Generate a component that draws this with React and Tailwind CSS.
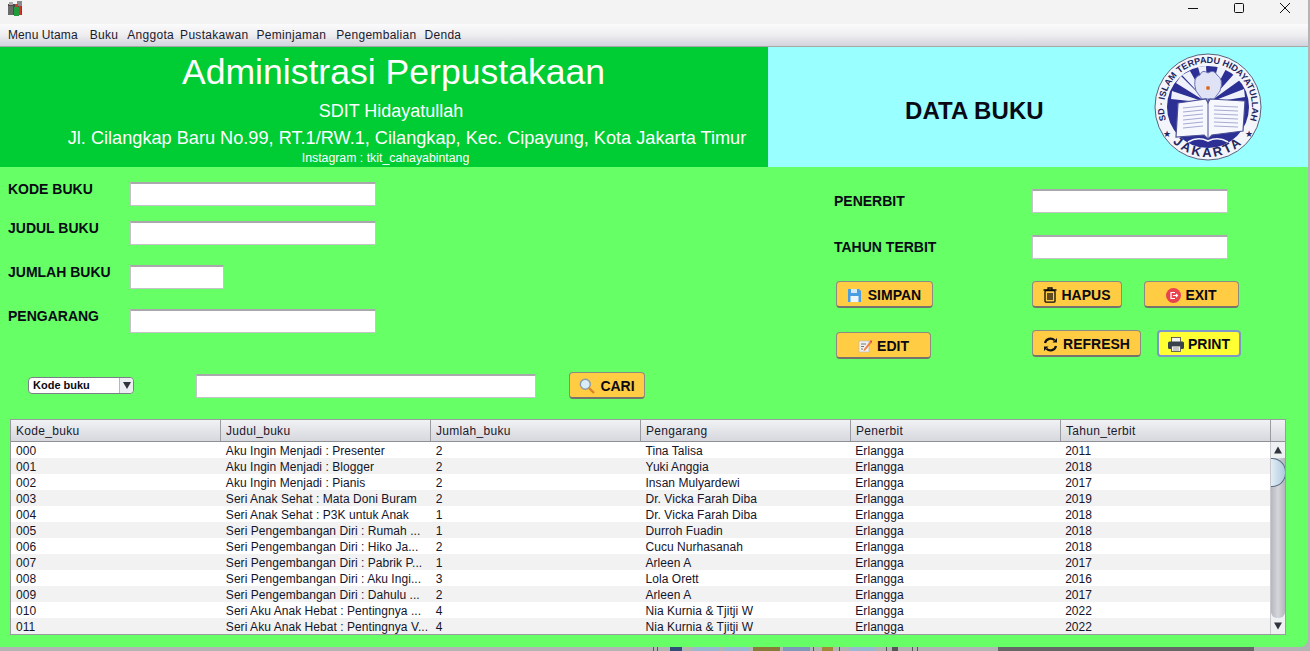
const MENUS = [
  ['Menu Utama', 'ml-2 tracking-[0.1px]'],
  ['Buku', 'ml-[12px]'],
  ['Anggota', 'ml-[9px]'],
  ['Pustakawan', 'ml-[6px]'],
  ['Peminjaman', 'ml-2'],
  ['Pengembalian', 'ml-[10px]'],
  ['Denda', 'ml-2'],
];

const COLUMNS = ['Kode_buku', 'Judul_buku', 'Jumlah_buku', 'Pengarang', 'Penerbit', 'Tahun_terbit'];

const ROWS = [
  ['000', 'Aku Ingin Menjadi : Presenter', '2', 'Tina Talisa', 'Erlangga', '2011'],
  ['001', 'Aku Ingin Menjadi : Blogger', '2', 'Yuki Anggia', 'Erlangga', '2018'],
  ['002', 'Aku Ingin Menjadi : Pianis', '2', 'Insan Mulyardewi', 'Erlangga', '2017'],
  ['003', 'Seri Anak Sehat : Mata Doni Buram', '2', 'Dr. Vicka Farah Diba', 'Erlangga', '2019'],
  ['004', 'Seri Anak Sehat : P3K untuk Anak', '1', 'Dr. Vicka Farah Diba', 'Erlangga', '2018'],
  ['005', 'Seri Pengembangan Diri : Rumah ...', '1', 'Durroh Fuadin', 'Erlangga', '2018'],
  ['006', 'Seri Pengembangan Diri : Hiko Ja...', '2', 'Cucu Nurhasanah', 'Erlangga', '2018'],
  ['007', 'Seri Pengembangan Diri : Pabrik P...', '1', 'Arleen A', 'Erlangga', '2017'],
  ['008', 'Seri Pengembangan Diri : Aku Ingi...', '3', 'Lola Orett', 'Erlangga', '2016'],
  ['009', 'Seri Pengembangan Diri : Dahulu ...', '2', 'Arleen A', 'Erlangga', '2017'],
  ['010', 'Seri Aku Anak Hebat : Pentingnya ...', '4', 'Nia Kurnia & Tjitji W', 'Erlangga', '2022'],
  ['011', 'Seri Aku Anak Hebat : Pentingnya V...', '4', 'Nia Kurnia & Tjitji W', 'Erlangga', '2022'],
];

function AppIcon() {
  return (
    <svg width="16" height="16" viewBox="0 0 16 16">
      <rect x="1" y="3" width="14" height="11" fill="#4a4a4a" />
      <rect x="2" y="1" width="4" height="3" fill="#a8a8a8" />
      <rect x="10" y="0" width="5" height="5" fill="#8a8a8a" />
      <rect x="1" y="5" width="5" height="9" fill="#6a6a6a" />
      <rect x="7" y="6" width="5" height="9" fill="#1f9d3a" />
      <rect x="12" y="5" width="2" height="9" fill="#d8322c" />
      <rect x="14" y="5" width="1" height="9" fill="#2a4fc0" />
      <rect x="8" y="3" width="3" height="3" fill="#c8402c" />
    </svg>
  );
}

function Logo() {
  return (
    <svg width="108" height="108" viewBox="0 0 108 108">
      <defs>
        <path id="topArc" d="M 14.3 73 A 44 44 0 1 1 93.7 73" />
        <path id="botArc" d="M 14 84 A 50 50 0 0 0 94 84" />
      </defs>
      <circle cx="54" cy="54" r="53" fill="#f4f5fa" stroke="#5a5f7d" strokeWidth="1" />
      <circle cx="54" cy="54" r="41" fill="#2c2f93" />
      <path d="M54 50 L17 46 L18 38 Z M54 50 L22 30 L27 23 Z M54 50 L36 18 L28 22 Z M54 50 L44 14 L52 13 Z M54 50 L64 13 L72 16 Z M54 50 L80 21 L86 27 Z M54 50 L90 36 L91 44 Z" fill="#eef0fa" />
      <path d="M42 38 Q38 24 46 22 Q48 16 54 20 Q60 16 63 22 Q70 26 66 38 L60 46 H48 Z" fill="#dfe3f5" stroke="#6b74b8" strokeWidth="1" />
      <circle cx="54" cy="35" r="2" fill="#d9702a" />
      <path d="M24 50 L52 46 L54 50 L56 46 L91 48 L89 78 L58 82 L54 86 L50 82 L22 84 Z" fill="#f7f8fd" stroke="#4b4f96" strokeWidth="1.2" />
      <path d="M54 50 V86" stroke="#4b4f96" strokeWidth="1" />
      <path d="M29 55 L49 53 M29 59 L49 57 M29 63 L49 61 M29 67 L49 65 M29 71 L49 69 M29 75 L49 73 M60 53 L84 54 M60 57 L84 58 M60 61 L84 62 M60 65 L84 66 M60 69 L84 70 M60 73 L84 74" stroke="#a6abd2" strokeWidth="1.2" />
      <path d="M34 89 Q44 83 54 88 Q64 83 74 89" stroke="#f4f5fa" strokeWidth="1.6" fill="none" />
      <text fontFamily="Liberation Sans" fontWeight="700" fontSize="9" fill="#23265f">
        <textPath href="#topArc" startOffset="50%" textAnchor="middle">SD · ISLAM TERPADU HIDAYATULLAH</textPath>
      </text>
      <text fontFamily="Liberation Sans" fontWeight="700" fontSize="13" fill="#23265f" letterSpacing="2.4">
        <textPath href="#botArc" startOffset="50%" textAnchor="middle">JAKARTA</textPath>
      </text>
      <text x="9" y="84" fontSize="9" fill="#23265f">★</text>
      <text x="91" y="84" fontSize="9" fill="#23265f">★</text>
    </svg>
  );
}

function TextBox({ className }) {
  return <div className={`h-6 bg-white border border-[#c4c4ca] border-t-2 border-t-[#a9a9ad] ${className}`} />;
}

function FieldLabel({ children, className }) {
  return <div className={`text-[14px] leading-4 font-bold text-[#0a0a14] ${className}`}>{children}</div>;
}

function ActionButton({ icon, label, className = 'bg-[#ffcc44] border border-[#8f8a80] border-b-2 border-b-[#77736c]', gap = 'gap-[5px]' }) {
  return (
    <div className={`h-[27px] pt-[2px] flex items-center justify-center ${gap} rounded-[4px] text-[14px] font-bold text-[#0a0a14] ${className}`}>
      {icon}
      <span>{label}</span>
    </div>
  );
}

function SaveIcon() {
  return (
    <svg width="13" height="13" viewBox="0 0 13 13">
      <path d="M0 0 H11 L13 2 V13 H0 Z" fill="#4a9ee0" />
      <rect x="3" y="0" width="6" height="4" fill="#d5e8f7" />
      <rect x="2.5" y="7" width="8" height="6" fill="#eef6fc" />
    </svg>
  );
}

function EditIcon() {
  return (
    <svg width="14" height="14" viewBox="0 0 14 14">
      <rect x="1" y="2" width="10" height="11" fill="#efefef" stroke="#b5b5b5" strokeWidth="0.6" />
      <path d="M3 5 H8 M3 7.5 H6 M3 10 H5" stroke="#777" strokeWidth="1" />
      <path d="M6 10 L12 2.5 L13.5 4 L7 11.5 L5.5 12 Z" fill="#f0803c" />
      <path d="M12 2.5 L13 1 L14 2.5 L13.5 4 Z" fill="#d9304a" />
    </svg>
  );
}

function TrashIcon() {
  return (
    <svg width="14" height="16" viewBox="0 0 14 16" fill="none" stroke="#0a0a0a" strokeWidth="1.3">
      <path d="M0.5 3 H13.5 M5 3 V1 H9 V3" />
      <rect x="2" y="3.5" width="10" height="11.7" rx="1.2" />
      <path d="M5 6 V13 M7 6 V13 M9 6 V13" />
    </svg>
  );
}

function ExitIcon() {
  return (
    <svg width="15" height="15" viewBox="0 0 15 15">
      <circle cx="7.5" cy="7.5" r="7.5" fill="#e8434e" />
      <path d="M9 4.5 H5 V10.5 H9" stroke="#fff" strokeWidth="1.2" fill="none" />
      <path d="M7 7.5 H11.5 M10 6 L11.5 7.5 L10 9" stroke="#fff" strokeWidth="1.1" fill="none" />
    </svg>
  );
}

function RefreshIcon() {
  return (
    <svg width="15" height="15" viewBox="0 0 15 15" fill="none" stroke="#111" strokeWidth="2.2">
      <path d="M2 6 A5.7 5.7 0 0 1 11.5 3.2" />
      <path d="M13 9 A5.7 5.7 0 0 1 3.5 11.8" />
      <path d="M9.5 5.4 H14 V1 Z" fill="#111" stroke="none" />
      <path d="M5.5 9.6 H1 V14 Z" fill="#111" stroke="none" />
    </svg>
  );
}

function PrintIcon() {
  return (
    <svg width="16" height="15" viewBox="0 0 16 15">
      <rect x="3.5" y="0.5" width="9" height="5" fill="#f4f4f4" stroke="#444" strokeWidth="0.8" />
      <rect x="0" y="4.5" width="16" height="7.5" rx="1.5" fill="#37424a" />
      <rect x="3.5" y="9" width="9" height="5.5" fill="#f4f4f4" stroke="#444" strokeWidth="0.8" />
      <path d="M5 11 H11 M5 13 H11" stroke="#888" strokeWidth="0.8" />
    </svg>
  );
}

function SearchIcon() {
  return (
    <svg width="16" height="16" viewBox="0 0 16 16">
      <circle cx="6.3" cy="6.3" r="5" fill="#d9ecf7" stroke="#8b9aa6" strokeWidth="1.4" />
      <path d="M10 10 L15 15" stroke="#d9822b" strokeWidth="2.4" />
    </svg>
  );
}

function ScrollBar() {
  return (
    <div className="w-[15px] shrink-0 flex flex-col bg-[#f2f3f5] border-l border-[#c8c9ce]">
      <div className="h-[16px] flex items-center justify-center bg-[#eef0f2]">
        <svg width="8" height="8" viewBox="0 0 8 8"><path d="M4 0.5 L8 7.5 H0 Z" fill="#30343c" /></svg>
      </div>
      <div className="flex-1 bg-gradient-to-r from-[#b6b8bf] via-[#d5d6db] to-[#b4b6bd] rounded-b-[6px]">
        <div className="h-[29px] w-[15px] rounded-r-[14px] border border-l-0 border-[#5a6f85] bg-gradient-to-r from-[#e4edf5] to-[#aecbe0]" />
      </div>
      <div className="h-[16px] flex items-center justify-center bg-[#eef0f2]">
        <svg width="8" height="8" viewBox="0 0 8 8"><path d="M4 7.5 L8 0.5 H0 Z" fill="#30343c" /></svg>
      </div>
    </div>
  );
}

// what shows of the desktop under the window
function DesktopStrip() {
  const pieces = [
    ['ml-[653px] w-px', 'bg-[#555]'],
    ['ml-[3px] w-px', 'bg-[#555]'],
    ['ml-[12px] w-[12px]', 'bg-[#2f4f78]'],
    ['ml-[11px] w-[27px]', 'bg-[#9ab8d0]'],
    ['ml-[3px] w-[27px]', 'bg-[#9ab8d0]'],
    ['ml-[3px] w-[27px]', 'bg-[#8a7a3a]'],
    ['ml-[3px] w-[27px]', 'bg-[#7f9ab8]'],
    ['ml-[3px] w-px', 'bg-[#555]'],
    ['ml-[8px] w-[11px]', 'bg-[#a5853a]'],
    ['ml-[6px] w-px', 'bg-[#555]'],
    ['ml-[9px] w-[27px]', 'bg-[#9ab8d0]'],
    ['ml-[10px] w-px', 'bg-[#555]'],
    ['ml-[5px] w-[6px]', 'bg-[#555]'],
    ['ml-[14px] w-px', 'bg-[#555]'],
    ['ml-[4px] w-px', 'bg-[#555]'],
    ['ml-[80px] w-[256px]', 'bg-[#666]'],
  ];
  return (
    <div className="h-1 flex">
      {pieces.map(([box, colour], i) => (
        <div key={i} className={`${box} ${colour}`} />
      ))}
    </div>
  );
}

export default function App() {
  return (
    <div className="w-[1310px] h-[651px] overflow-hidden bg-[#b4b4b4] font-['Liberation_Sans',Arial,sans-serif]">
      <div className="w-[1308px] h-[647px] flex flex-col bg-[#66ff66] rounded-br-[8px] overflow-hidden">
        {/* title bar */}
        <div className="h-6 shrink-0 flex items-center justify-between bg-[#f3f3f3]">
          <div className="ml-[7px] -mt-[7px]"><AppIcon /></div>
          <div className="flex items-center">
            <svg width="12" height="12" viewBox="0 0 12 12" className="mr-[34px] -mt-[8px]">
              <path d="M1 6.5 H11" stroke="#111" strokeWidth="1" />
            </svg>
            <svg width="12" height="12" viewBox="0 0 12 12" className="mr-[34px] -mt-[8px]">
              <rect x="1.5" y="1.5" width="9" height="9" rx="1" fill="none" stroke="#111" strokeWidth="1" />
            </svg>
            <svg width="12" height="12" viewBox="0 0 12 12" className="mr-[17px] -mt-[8px]">
              <path d="M1 1 L11 11 M11 1 L1 11" stroke="#111" strokeWidth="1" />
            </svg>
          </div>
        </div>

        {/* menu bar */}
        <div className="h-[23px] shrink-0 flex items-center bg-gradient-to-b from-[#fbfbfc] via-[#eeeef1] to-[#d2d3dc] border-b border-[#a5a7a8] text-[12px] tracking-[0.3px] text-[#1b1a2e]">
          {MENUS.map(([name, margin]) => (
            <span key={name} className={margin}>{name}</span>
          ))}
        </div>

        {/* header */}
        <div className="h-[120px] shrink-0 flex">
          <div className="w-[768px] flex flex-col items-center bg-[#00cc33] text-white">
            <div className="mt-[2px] ml-[19px] text-[35.6px] leading-[46px] whitespace-nowrap">Administrasi Perpustakaan</div>
            <div className="mt-[6px] ml-[14px] text-[18px] leading-[20px] whitespace-nowrap">SDIT Hidayatullah</div>
            <div className="mt-[7px] ml-[46px] text-[18.16px] leading-[21px] whitespace-nowrap">Jl. Cilangkap Baru No.99, RT.1/RW.1, Cilangkap, Kec. Cipayung, Kota Jakarta Timur</div>
            <div className="mt-[2px] ml-[3px] text-[12.3px] leading-[14px] whitespace-nowrap">Instagram : tkit_cahayabintang</div>
          </div>
          <div className="flex-1 flex items-center bg-[#99ffff]">
            <div className="ml-[137px] w-[249px] mt-[8px] text-[24px] tracking-[0.05px] font-bold text-[#0a0a14]">DATA BUKU</div>
            <Logo />
          </div>
        </div>

        {/* form */}
        <div className="flex-1 flex flex-col">
          <div className="h-[252px] shrink-0 flex">
            <div className="w-[834px] pl-2 pt-[15px]">
              <div className="flex h-[39px]">
                <FieldLabel className="w-[122px] -mt-px">KODE BUKU</FieldLabel>
                <TextBox className="w-[246px]" />
              </div>
              <div className="flex h-[44px]">
                <FieldLabel className="w-[122px] -mt-px">JUDUL BUKU</FieldLabel>
                <TextBox className="w-[246px]" />
              </div>
              <div className="flex h-[44px]">
                <FieldLabel className="w-[122px] -mt-px">JUMLAH BUKU</FieldLabel>
                <TextBox className="w-[94px]" />
              </div>
              <div className="flex h-[44px]">
                <FieldLabel className="w-[122px] -mt-px">PENGARANG</FieldLabel>
                <TextBox className="w-[246px]" />
              </div>
              <div className="flex items-center h-[27px] mt-[19px]">
                <div className="ml-5 w-[106px] h-[17px] flex items-center justify-between bg-white rounded-[4px] border border-[#7c7f88] text-[11px] font-bold text-[#0a0a14]">
                  <span className="ml-1">Kode buku</span>
                  <span className="w-[14px] h-full flex items-center justify-center border-l border-[#b5b7bd] rounded-r-[4px] bg-[#eceef2]">
                    <svg width="8" height="7" viewBox="0 0 8 7"><path d="M4 7 L8 0 H0 Z" fill="#30343c" /></svg>
                  </span>
                </div>
                <TextBox className="ml-[62px] w-[340px]" />
                <div className="ml-[33px] w-[76px]"><ActionButton icon={<SearchIcon />} label="CARI" /></div>
              </div>
            </div>

            <div className="flex-1 pt-[22px]">
              <div className="flex h-[46px]">
                <FieldLabel className="w-[198px] pt-[4px]">PENERBIT</FieldLabel>
                <TextBox className="w-[196px]" />
              </div>
              <div className="flex h-[46px]">
                <FieldLabel className="w-[198px] pt-[4px]">TAHUN TERBIT</FieldLabel>
                <TextBox className="w-[196px]" />
              </div>
              <div className="flex items-start h-[49px]">
                <div className="ml-[2px] w-[97px]"><ActionButton icon={<SaveIcon />} label="SIMPAN" gap="gap-[7px]" /></div>
                <div className="ml-[99px] w-[90px]"><ActionButton icon={<TrashIcon />} label="HAPUS" gap="gap-[4px]" /></div>
                <div className="ml-[22px] w-[95px]"><ActionButton icon={<ExitIcon />} label="EXIT" gap="gap-[4px]" /></div>
              </div>
              <div className="flex items-start">
                <div className="ml-[2px] w-[95px] mt-[2px]"><ActionButton icon={<EditIcon />} label="EDIT" /></div>
                <div className="ml-[101px] w-[109px]"><ActionButton icon={<RefreshIcon />} label="REFRESH" /></div>
                <div className="ml-[16px] w-[84px]">
                  <ActionButton
                    icon={<PrintIcon />}
                    label="PRINT"
                    gap="gap-[4px]"
                    className="bg-[#ffff33] border-2 border-[#7f96c8]"
                  />
                </div>
              </div>
            </div>
          </div>

          {/* table */}
          <div className="ml-[10px] w-[1276px] h-[216px] flex flex-col border border-[#9a9ba0] bg-white overflow-hidden">
            <div className="h-[22px] shrink-0 flex bg-gradient-to-b from-[#f1f2f4] to-[#d6d8de] border-b border-[#8f9095] text-[12px] tracking-[0.3px] text-[#1b1a2e]">
              {COLUMNS.map((col) => (
                <div key={col} className="w-[210px] pl-[5px] leading-[22px] border-r border-[#9a9ba0]">{col}</div>
              ))}
              <div className="flex-1" />
            </div>
            <div className="flex-1 flex min-h-0">
              <div className="flex-1 min-w-0">
                {ROWS.map((row, i) => (
                  <div key={row[0]} className={`h-4 flex text-[12px] leading-[18px] tracking-[0.05px] text-[#14142a] ${i % 2 ? 'bg-[#f2f2f2]' : 'bg-white'}`}>
                    {row.map((cell, j) => (
                      <div key={j} className="w-[210px] pl-[5px] whitespace-nowrap overflow-hidden">{cell}</div>
                    ))}
                  </div>
                ))}
              </div>
              <ScrollBar />
            </div>
          </div>
        </div>
      </div>
      <DesktopStrip />
    </div>
  );
}
